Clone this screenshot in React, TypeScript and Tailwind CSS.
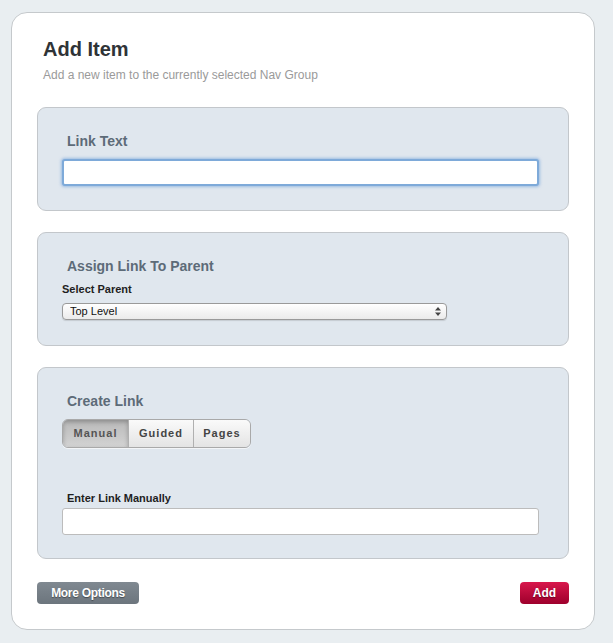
import React from 'react';

const Section: React.FC<{ className?: string; children: React.ReactNode }> = ({ className = '', children }) => (
  <div className={`rounded-[9px] border border-[#c3c7cb] bg-[#e0e7ee] px-[24px] ${className}`}>{children}</div>
);

const Heading: React.FC<{ children: React.ReactNode }> = ({ children }) => (
  <h2 className="ml-[5px] text-[14px] font-bold leading-[17px] text-[#5d6b78]">{children}</h2>
);

const App: React.FC = () => {
  const tabs = ['Manual', 'Guided', 'Pages'];

  return (
    <div className="min-h-[643px] w-[613px] bg-[#e9eef1] pt-[12px] pl-[11px] font-['Liberation_Sans',Arial,sans-serif]">
      <div className="h-[618px] w-[584px] rounded-[16px] border border-[#c5c9cc] bg-white px-[25px] pt-[24px]">
        <div className="ml-[6px]">
          <h1 className="text-[20px] font-bold leading-[24px] text-[#2f3337]">Add Item</h1>
          <p className="mt-[7px] text-[12px] leading-[14px] text-[#9a9a9a]">
            Add a new item to the currently selected Nav Group
          </p>
        </div>

        {/* link text */}
        <Section className="mt-[25px] h-[104px] pt-[25px]">
          <Heading>Link Text</Heading>
          <input
            type="text"
            className="mt-[9px] block h-[27px] w-[477px] rounded-[3px] border-2 border-[#7eaad9] bg-white shadow-[0_0_3px_1px_rgba(110,160,220,0.6)] outline-none"
          />
        </Section>

        {/* parent */}
        <Section className="mt-[21px] h-[114px] pt-[25px]">
          <Heading>Assign Link To Parent</Heading>
          <div className="mt-[8px] text-[11px] font-bold leading-[13px] text-[#1e1e1e]">Select Parent</div>
          <div className="relative mt-[7px] w-[385px]">
            <select className="block h-[17px] w-full appearance-none rounded-[4px] border border-[#9a9a9a] bg-gradient-to-b from-white to-[#ebebeb] pl-[7px] text-[11px] leading-[15px] text-[#111] outline-none shadow-[0_1px_1px_rgba(0,0,0,0.12)]">
              <option>Top Level</option>
            </select>
            <svg className="pointer-events-none absolute right-[6px] top-[4px]" width="6" height="9" viewBox="0 0 6 9">
              <path d="M3 0 L6 3.5 H0 Z M0 5.5 H6 L3 9 Z" fill="#444" />
            </svg>
          </div>
        </Section>

        {/* create link */}
        <Section className="mt-[21px] h-[192px] pt-[25px]">
          <Heading>Create Link</Heading>
          <div className="mt-[9px] flex h-[29px] w-[189px] overflow-hidden rounded-[6px] border border-[#a9a9a9] shadow-[0_1px_0_rgba(255,255,255,0.6)]">
            {tabs.map((t, i) => (
              <button
                key={t}
                className={`flex h-full items-center justify-center text-[11px] font-bold tracking-[1px] ${
                  i === 0
                    ? 'w-[65px] bg-gradient-to-b from-[#b9b9b9] to-[#d3d3d3] text-[#555] shadow-[inset_0_2px_4px_rgba(0,0,0,0.25)]'
                    : 'border-l border-[#b0b0b0] bg-gradient-to-b from-[#fafafa] to-[#e4e4e4] text-[#444]'
                } ${i === 1 ? 'w-[65px]' : ''} ${i === 2 ? 'flex-1' : ''}`}
              >
                {t}
              </button>
            ))}
          </div>
          <div className="ml-[5px] mt-[44px] text-[11px] font-bold leading-[13px] text-[#1e1e1e]">Enter Link Manually</div>
          <input
            type="text"
            className="mt-[3px] block h-[27px] w-[477px] rounded-[3px] border border-[#bcbcbc] bg-white outline-none"
          />
        </Section>

        <div className="mt-[23px] flex items-center justify-between">
          <button className="h-[22px] w-[102px] rounded-[4px] bg-gradient-to-b from-[#808991] to-[#6c757d] text-[12px] font-bold tracking-[-0.3px] text-white [text-shadow:0_1px_1px_rgba(0,0,0,0.4)]">
            More Options
          </button>
          <button className="h-[22px] w-[49px] rounded-[4px] bg-gradient-to-b from-[#d8174c] to-[#9e002c] text-[12px] font-bold text-white [text-shadow:0_1px_1px_rgba(0,0,0,0.4)]">
            Add
          </button>
        </div>
      </div>
    </div>
  );
};

export default App;
